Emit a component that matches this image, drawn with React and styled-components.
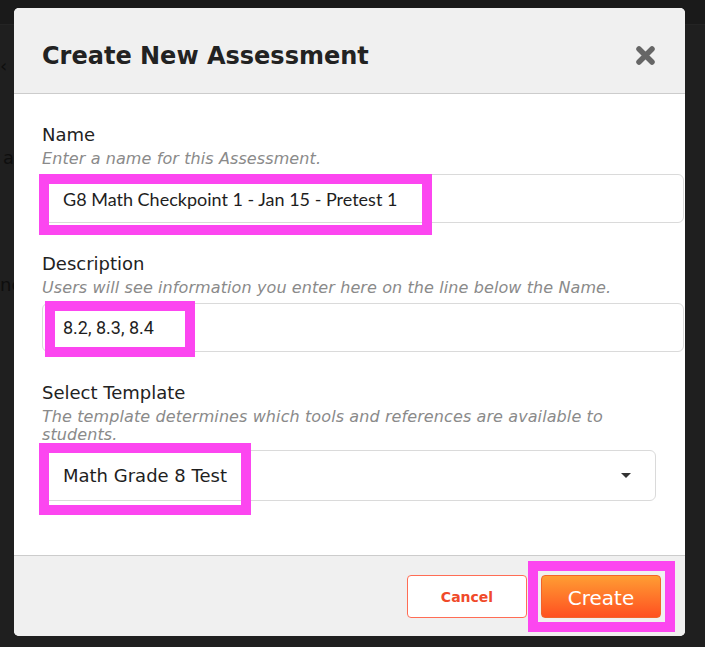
import React from 'react';
import styled, { createGlobalStyle } from 'styled-components';

const GlobalStyle = createGlobalStyle`
  html, body {
    margin: 0;
    padding: 0;
    background: #1f1f1f;
  }
  * {
    box-sizing: border-box;
  }
`;

const Page = styled.div`
  position: relative;
  width: 705px;
  height: 647px;
  overflow: hidden;
  background: #1f1f1f;
  font-family: "DejaVu Sans", Verdana, sans-serif;
`;

const TopBand = styled.div`
  height: 25px;
  background: #1a1a1a;
  border-bottom: 1px solid #242424;
`;

const BgText = styled.div`
  display: flex;
  flex-direction: column;
  align-items: flex-start;
  font-size: 18px;
  line-height: 22px;
  color: #0e0e0e;
`;

const BgLine = styled.span`
  margin-top: ${(p) => p.$gap}px;
  margin-left: ${(p) => p.$left}px;
`;

const Modal = styled.div`
  position: absolute;
  left: 14px;
  top: 8px;
  width: 671px;
  height: 628px;
  background: #fff;
  border-radius: 5px;
  overflow: hidden;
  display: flex;
  flex-direction: column;
`;

const Header = styled.div`
  height: 86px;
  padding: 34px 29px 0 28px;
  background: #f0f0f0;
  border-bottom: 1px solid #cccccc;
  display: flex;
  justify-content: space-between;
  align-items: flex-start;
`;

const Title = styled.h2`
  margin: 0;
  font-size: 24px;
  line-height: 28.8px;
  font-weight: bold;
  color: #222;
`;

const CloseButton = styled.button`
  margin-top: 3px;
  padding: 0;
  border: 0;
  background: none;
  width: 21px;
  height: 21px;
  display: flex;
  cursor: pointer;
`;

const Body = styled.div`
  flex: 1;
  padding: 30px 29px 0 28px;
  display: flex;
  flex-direction: column;
  gap: 30px;
`;

const Field = styled.div`
  display: flex;
  flex-direction: column;
`;

const Label = styled.label`
  font-size: 18px;
  line-height: 22px;
  color: #222;
`;

const Hint = styled.div`
  margin-top: 4px;
  font-size: 16px;
  line-height: 18px;
  font-style: italic;
  letter-spacing: 0.1px;
  color: #8a8a8a;
`;

const Input = styled.div`
  margin-top: 6px;
  width: ${(p) => (p.$wide ? 'calc(100% + 28px)' : '100%')};
  height: ${(p) => (p.$wide ? 49 : 51)}px;
  padding: 0 20px;
  border: 1px solid #dadada;
  border-radius: 6px;
  background: #fff;
  display: flex;
  align-items: center;
  justify-content: space-between;
  font-family: ${(p) => p.$font};
  font-size: 18px;
  color: #1e1e1e;
`;

const Caret = styled.span`
  width: 0;
  height: 0;
  margin-right: 4px;
  border-left: 5px solid transparent;
  border-right: 5px solid transparent;
  border-top: 5px solid #333;
`;

const Footer = styled.div`
  height: 81px;
  padding: 19px 24px 0;
  background: #f0f0f0;
  border-top: 1px solid #cccccc;
  display: flex;
  justify-content: flex-end;
  align-items: flex-start;
  gap: 14px;
`;

const Button = styled.button`
  width: 120px;
  height: 43px;
  border-radius: 4px;
  font-family: "DejaVu Sans", Verdana, sans-serif;
  cursor: pointer;
  padding: 0;
  ${(p) =>
    p.$primary
      ? `
    border: 1px solid #f2642a;
    background: linear-gradient(to bottom, #ff9d33, #ff5021);
    color: #fff;
    font-size: 20px;
    padding-top: 3px;
  `
      : `
    border: 1px solid #ff6d55;
    background: #fff;
    color: #f04a2a;
    font-size: 14px;
    font-weight: bold;
  `}
`;

const Highlight = styled.div`
  position: absolute;
  left: ${(p) => p.$x}px;
  top: ${(p) => p.$y}px;
  width: ${(p) => p.$w}px;
  height: ${(p) => p.$h}px;
  border: 10px solid #fc46f0;
  pointer-events: none;
`;

const CloseIcon = () => (
  <svg width="21" height="21" viewBox="0 0 21 21">
    <path
      d="M4 4 L17 17 M17 4 L4 17"
      stroke="#666"
      strokeWidth="5.5"
      strokeLinecap="round"
      fill="none"
    />
  </svg>
);

const highlights = [
  { x: 39, y: 174, w: 393, h: 61 },
  { x: 45, y: 301, w: 150, h: 56 },
  { x: 39, y: 443, w: 212, h: 72 },
  { x: 528, y: 561, w: 147, h: 71 },
];

const App = () => {
  return (
    <Page>
      <GlobalStyle />
      <TopBand />
      <BgText>
        <BgLine $gap={30} $left={0}>‹</BgLine>
        <BgLine $gap={70} $left={3}>a</BgLine>
        <BgLine $gap={105} $left={0}>nc</BgLine>
      </BgText>

      <Modal>
        <Header>
          <Title>Create New Assessment</Title>
          <CloseButton aria-label="Close">
            <CloseIcon />
          </CloseButton>
        </Header>

        <Body>
          <Field>
            <Label>Name</Label>
            <Hint>Enter a name for this Assessment.</Hint>
            <Input $wide $font={'Lato, "Noto Sans", sans-serif'}>
              G8 Math Checkpoint 1 - Jan 15 - Pretest 1
            </Input>
          </Field>
          <Field>
            <Label>Description</Label>
            <Hint>Users will see information you enter here on the line below the Name.</Hint>
            <Input $wide $font={'Roboto, "Liberation Sans", sans-serif'}>
              8.2, 8.3, 8.4
            </Input>
          </Field>
          <Field>
            <Label>Select Template</Label>
            <Hint>The template determines which tools and references are available to students.</Hint>
            <Input $font={'"DejaVu Sans", Verdana, sans-serif'}>
              Math Grade 8 Test
              <Caret />
            </Input>
          </Field>
        </Body>

        <Footer>
          <Button>Cancel</Button>
          <Button $primary>Create</Button>
        </Footer>
      </Modal>

      {highlights.map((h, i) => (
        <Highlight key={i} $x={h.x} $y={h.y} $w={h.w} $h={h.h} />
      ))}
    </Page>
  );
};

export default App;
